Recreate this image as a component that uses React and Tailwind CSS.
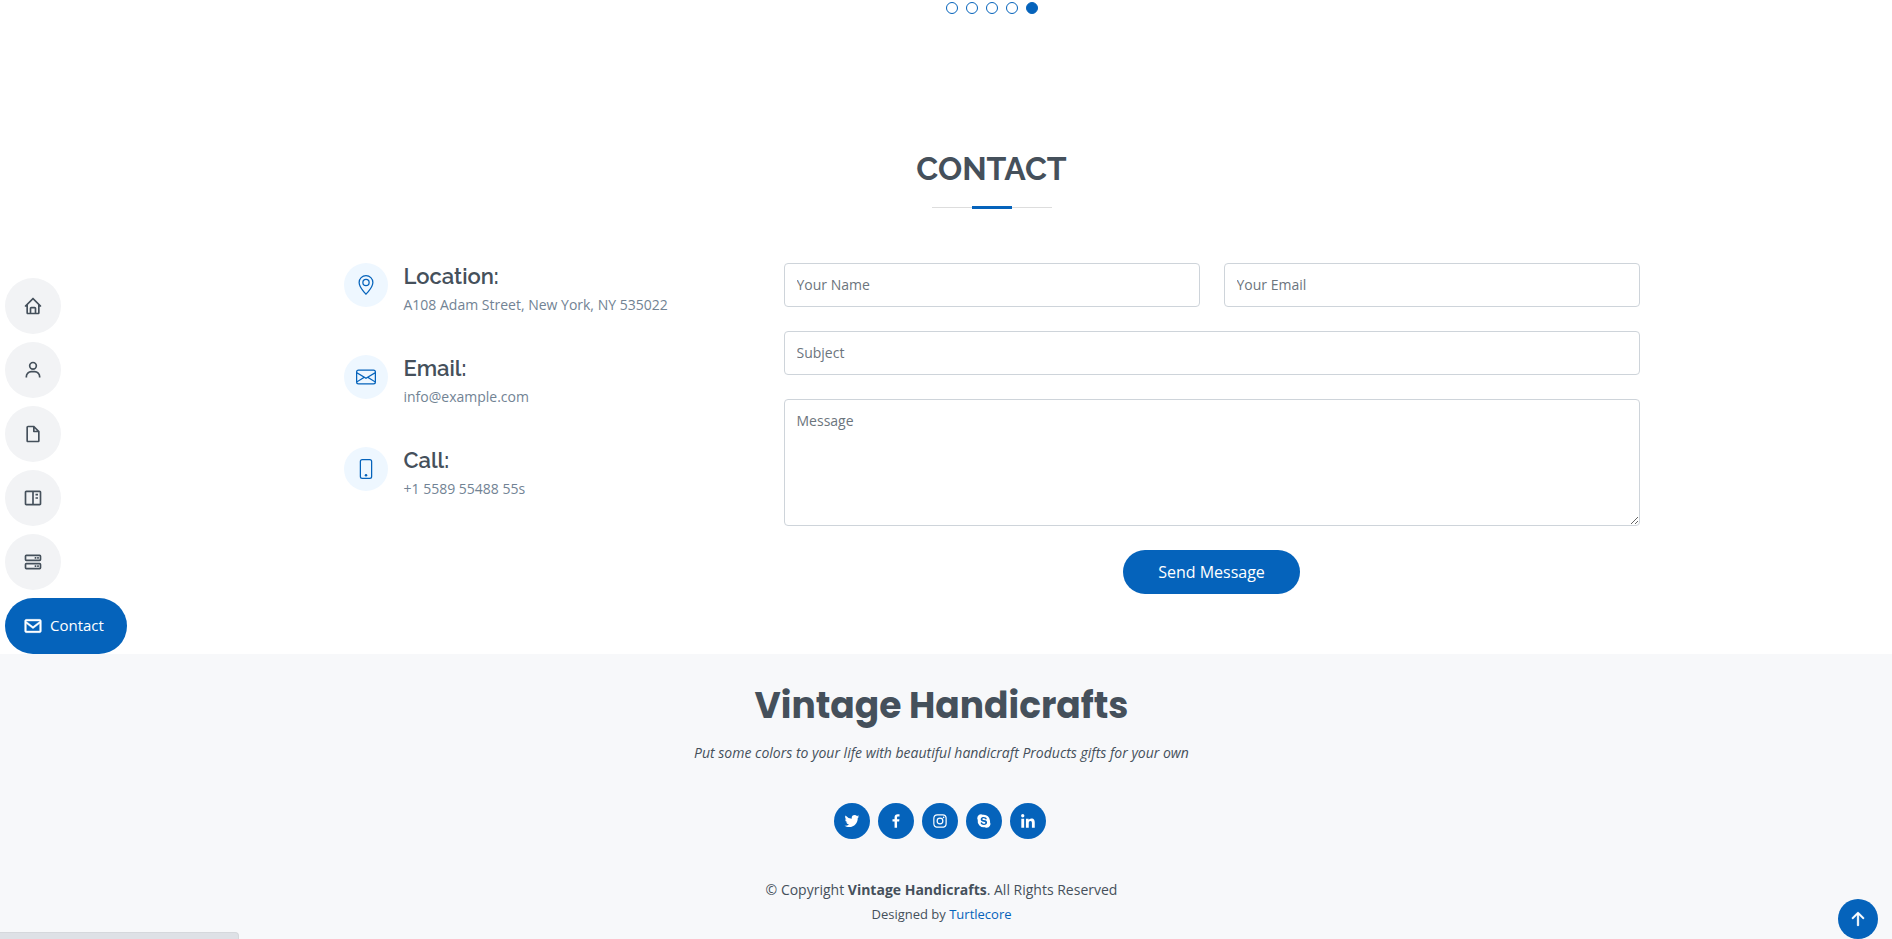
import React from 'react';
import {
  BiHome,
  BiUser,
  BiFileBlank,
  BiBookContent,
  BiServer,
  BiEnvelope,
  BiLogoTwitter,
  BiLogoFacebook,
  BiLogoInstagram,
  BiLogoSkype,
  BiLogoLinkedin,
} from 'react-icons/bi';
import { BsGeoAlt, BsEnvelope, BsPhone, BsArrowUpShort } from 'react-icons/bs';

const navItems = [
  { icon: BiHome, label: 'Home' },
  { icon: BiUser, label: 'About' },
  { icon: BiFileBlank, label: 'Resume' },
  { icon: BiBookContent, label: 'Portfolio' },
  { icon: BiServer, label: 'Services' },
];

const infoItems = [
  { icon: BsGeoAlt, title: 'Location:', text: 'A108 Adam Street, New York, NY 535022' },
  { icon: BsEnvelope, title: 'Email:', text: 'info@example.com' },
  { icon: BsPhone, title: 'Call:', text: '+1 5589 55488 55s' },
];

const socials = [
  { icon: BiLogoTwitter, label: 'Twitter' },
  { icon: BiLogoFacebook, label: 'Facebook' },
  { icon: BiLogoInstagram, label: 'Instagram' },
  { icon: BiLogoSkype, label: 'Skype' },
  { icon: BiLogoLinkedin, label: 'LinkedIn' },
];

const fieldClass =
  'block w-full rounded border border-[#ced4da] bg-white px-3 text-sm text-[#212529] placeholder:text-[#6c757d] outline-none focus:border-[#0563bb]';

function SideNav() {
  return (
    <nav className="fixed inset-y-0 left-0 z-20 flex flex-col items-start justify-center pl-[5px]">
      {navItems.map((item) => (
        <a
          key={item.label}
          href="#"
          aria-label={item.label}
          className="mb-2 flex h-14 w-14 items-center justify-center rounded-full bg-[#f2f3f5] text-[#45505b]"
        >
          <item.icon className="h-5 w-5" />
        </a>
      ))}
      <a
        href="#contact"
        className="mb-2 flex h-14 items-center gap-[7px] rounded-full bg-[#0563bb] pr-[23px] pl-[18px] text-[15px] text-white"
      >
        <BiEnvelope className="h-5 w-5 stroke-current stroke-[0.5]" />
        <span>Contact</span>
      </a>
    </nav>
  );
}

function SliderDots() {
  return (
    <div className="flex justify-center gap-2 pt-[2px]">
      {[1, 2, 3, 4, 5].map((n) => (
        <button
          key={n}
          type="button"
          aria-label={`Go to slide ${n}`}
          className={`h-3 w-3 rounded-full border border-[#0563bb] ${n === 5 ? 'bg-[#0563bb]' : 'bg-white'}`}
        />
      ))}
    </div>
  );
}

function ContactInfo() {
  return (
    <div className="flex w-1/3 flex-col gap-8 px-3">
      {infoItems.map((item) => (
        <div key={item.title} className="flex h-[60px] gap-4">
          <div className="flex h-11 w-11 shrink-0 items-center justify-center rounded-full bg-[#eef7ff] text-[#0563bb]">
            <item.icon className="h-5 w-5" />
          </div>
          <div>
            <h4 className="font-['Raleway','Lato',sans-serif] text-[22px] leading-[26px] font-semibold text-[#45505b]">
              {item.title}
            </h4>
            <p className="mt-[5px] text-sm leading-[22px] text-[#728394]">{item.text}</p>
          </div>
        </div>
      ))}
    </div>
  );
}

function ContactForm() {
  return (
    <form className="flex w-2/3 flex-col gap-6 px-3" onSubmit={(e) => e.preventDefault()}>
      <div className="grid grid-cols-2 gap-6">
        <input type="text" aria-label="Your Name" placeholder="Your Name" className={`${fieldClass} h-11 pb-[2px]`} />
        <input type="email" aria-label="Your Email" placeholder="Your Email" className={`${fieldClass} h-11 pb-[2px]`} />
      </div>
      <input type="text" aria-label="Subject" placeholder="Subject" className={`${fieldClass} h-11 pb-[2px]`} />
      <textarea aria-label="Message" placeholder="Message" className={`${fieldClass} h-[127px] resize-y py-[10px] leading-[21px]`} />
      <div className="text-center">
        <button type="submit" className="h-11 rounded-full bg-[#0563bb] px-[35px] text-base text-white">
          Send Message
        </button>
      </div>
    </form>
  );
}

function Footer() {
  return (
    <footer className="flex-1 bg-[#f7f8fa] pt-[30px] pr-[9px] text-center text-sm text-[#45505b]">
      <h3 className="font-['Poppins','Inter',sans-serif] text-4xl leading-[43px] font-bold">Vintage Handicrafts</h3>
      <p className="mt-[15px] leading-[21px] italic">
        Put some colors to your life with beautiful handicraft Products gifts for your own
      </p>
      <div className="mt-10 flex justify-center gap-2 pr-1">
        {socials.map((item) => (
          <a
            key={item.label}
            href="#"
            aria-label={item.label}
            className="flex h-9 w-9 items-center justify-center rounded-full bg-[#0563bb] text-white"
          >
            <item.icon className="h-[18px] w-[18px]" />
          </a>
        ))}
      </div>
      <div className="mt-10 leading-[21px]">
        © Copyright <strong className="font-bold">Vintage Handicrafts</strong>. All Rights Reserved
      </div>
      <div className="mt-1 text-[13px] leading-5">
        Designed by{' '}
        <a href="#" className="text-[#0563bb]">
          Turtlecore
        </a>
      </div>
    </footer>
  );
}

export default function App() {
  return (
    <div className="flex min-h-screen flex-col bg-white font-['Open_Sans',sans-serif] text-[#272829]">
      <SideNav />

      <main className="pr-[9px] pl-[100px]">
        <SliderDots />
        <section id="contact" className="mx-auto mt-[136px] max-w-[1320px] pb-[60px]">
          {/* Section title with two-tone underline */}
          <div className="flex flex-col items-center">
            <h2 className="font-['Raleway','Lato',sans-serif] text-[32px] leading-[38px] font-bold text-[#45505b]">
              CONTACT
            </h2>
            <div className="mt-[18px] flex h-[3px] w-[120px] items-center justify-center bg-[linear-gradient(#ddd,#ddd)] bg-[length:100%_1px] bg-center bg-no-repeat">
              <span className="h-[3px] w-10 bg-[#0563bb]" />
            </div>
          </div>

          <div className="mt-[54px] flex">
            <ContactInfo />
            <ContactForm />
          </div>
        </section>
      </main>

      <Footer />

      {/* Link status bar */}
      <div className="fixed bottom-0 left-0 h-[7px] w-[239px] rounded-tr border-t border-r border-[#d5d8dc] bg-[#dee1e6]" />

      <a
        href="#"
        aria-label="Back to top"
        className="fixed right-[14px] bottom-0 flex h-10 w-10 items-center justify-center rounded-full bg-[#0563bb] text-white"
      >
        <BsArrowUpShort className="h-7 w-7 stroke-current stroke-[0.2]" />
      </a>
    </div>
  );
}
